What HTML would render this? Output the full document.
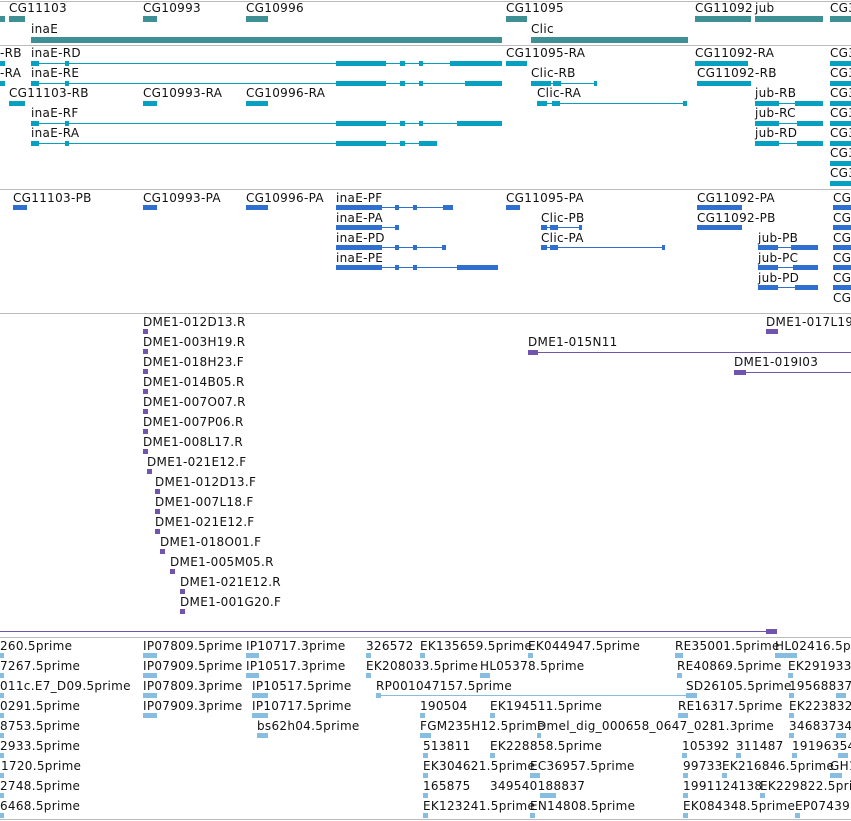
<!DOCTYPE html>
<html><head><meta charset="utf-8"><style>
body{margin:0;width:851px;height:821px;overflow:hidden;background:#fff;position:relative}
.l{position:absolute;font-family:"DejaVu Sans","Liberation Sans",sans-serif;font-size:12px;line-height:14px;letter-spacing:.3px;color:#111;white-space:nowrap}
.d{position:absolute;left:0;width:851px;height:1px;background:#bbb}
.g,.t,.p,.c,.e{position:absolute}
.g{background:#3f9094;height:6px}
.t{background:#08a0c0}
.p{background:#2f6fd0}
.c{background:#7054ae}
.e{background:#86bde0}
</style></head><body>
<div class="d" style="top:1px"></div>
<div class="d" style="top:45px"></div>
<div class="d" style="top:189px"></div>
<div class="d" style="top:313px"></div>
<div class="d" style="top:637px"></div>
<div class="d" style="top:819px"></div>

<!-- genes -->
<div class="l" style="left:9px;top:1px">CG11103</div>
<div class="l" style="left:143px;top:1px">CG10993</div>
<div class="l" style="left:246px;top:1px">CG10996</div>
<div class="l" style="left:506px;top:1px">CG11095</div>
<div class="l" style="left:695px;top:1px">CG11092</div>
<div class="l" style="left:755px;top:1px">jub</div>
<div class="l" style="left:830px;top:1px">CG3</div>
<div class="l" style="left:31px;top:22px">inaE</div>
<div class="l" style="left:531px;top:22px">Clic</div>
<div class="g" style="left:0;top:16px;width:5px"></div>
<div class="g" style="left:9px;top:16px;width:16px"></div>
<div class="g" style="left:143px;top:16px;width:14px"></div>
<div class="g" style="left:246px;top:16px;width:22px"></div>
<div class="g" style="left:506px;top:16px;width:21px"></div>
<div class="g" style="left:695px;top:16px;width:56px"></div>
<div class="g" style="left:755px;top:16px;width:68px"></div>
<div class="g" style="left:830px;top:16px;width:21px"></div>
<div class="g" style="left:31px;top:37px;width:471px"></div>
<div class="g" style="left:531px;top:37px;width:157px"></div>

<!-- transcripts -->
<div class="l" style="left:0;top:46px">-RB</div>
<div class="l" style="left:31px;top:46px">inaE-RD</div>
<div class="l" style="left:506px;top:46px">CG11095-RA</div>
<div class="l" style="left:695px;top:46px">CG11092-RA</div>
<div class="l" style="left:0;top:66px">-RA</div>
<div class="l" style="left:31px;top:66px">inaE-RE</div>
<div class="l" style="left:531px;top:66px">Clic-RB</div>
<div class="l" style="left:697px;top:66px">CG11092-RB</div>
<div class="l" style="left:9px;top:86px">CG11103-RB</div>
<div class="l" style="left:143px;top:86px">CG10993-RA</div>
<div class="l" style="left:246px;top:86px">CG10996-RA</div>
<div class="l" style="left:537px;top:86px">Clic-RA</div>
<div class="l" style="left:755px;top:86px">jub-RB</div>
<div class="l" style="left:31px;top:106px">inaE-RF</div>
<div class="l" style="left:755px;top:106px">jub-RC</div>
<div class="l" style="left:31px;top:126px">inaE-RA</div>
<div class="l" style="left:755px;top:126px">jub-RD</div>
<div class="l" style="left:830px;top:46px">CG3</div><div class="l" style="left:830px;top:66px">CG3</div><div class="l" style="left:830px;top:86px">CG3</div><div class="l" style="left:830px;top:106px">CG3</div><div class="l" style="left:830px;top:126px">CG3</div><div class="l" style="left:830px;top:146px">CG3</div><div class="l" style="left:830px;top:166px">CG3</div>
<!-- lines row1 y63 -->
<div class="t" style="left:0;top:61px;width:5px;height:5px"></div>
<div class="t" style="left:31px;top:63px;width:471px;height:1px"></div>
<div class="t" style="left:31px;top:61px;width:8px;height:5px"></div><div class="t" style="left:65px;top:61px;width:4px;height:5px"></div>
<div class="t" style="left:336px;top:61px;width:50px;height:5px"></div><div class="t" style="left:400px;top:61px;width:5px;height:5px"></div><div class="t" style="left:419px;top:61px;width:4px;height:5px"></div>
<div class="t" style="left:450px;top:61px;width:52px;height:5px"></div>
<div class="t" style="left:506px;top:61px;width:21px;height:5px"></div>
<div class="t" style="left:695px;top:61px;width:53px;height:5px"></div>
<div class="t" style="left:830px;top:61px;width:21px;height:5px"></div>
<!-- row2 y83 -->
<div class="t" style="left:0;top:81px;width:5px;height:5px"></div>
<div class="t" style="left:31px;top:83px;width:471px;height:1px"></div>
<div class="t" style="left:31px;top:81px;width:8px;height:5px"></div><div class="t" style="left:65px;top:81px;width:4px;height:5px"></div>
<div class="t" style="left:336px;top:81px;width:50px;height:5px"></div><div class="t" style="left:400px;top:81px;width:5px;height:5px"></div><div class="t" style="left:419px;top:81px;width:4px;height:5px"></div>
<div class="t" style="left:465px;top:81px;width:37px;height:5px"></div>
<div class="t" style="left:531px;top:83px;width:66px;height:1px"></div>
<div class="t" style="left:531px;top:81px;width:20px;height:5px"></div><div class="t" style="left:553px;top:81px;width:8px;height:5px"></div><div class="t" style="left:594px;top:81px;width:3px;height:5px"></div>
<div class="t" style="left:697px;top:81px;width:54px;height:5px"></div>
<div class="t" style="left:830px;top:81px;width:21px;height:5px"></div>
<!-- row3 y103 -->
<div class="t" style="left:9px;top:101px;width:16px;height:5px"></div>
<div class="t" style="left:143px;top:101px;width:14px;height:5px"></div>
<div class="t" style="left:246px;top:101px;width:22px;height:5px"></div>
<div class="t" style="left:537px;top:103px;width:150px;height:1px"></div>
<div class="t" style="left:537px;top:101px;width:10px;height:5px"></div><div class="t" style="left:552px;top:101px;width:8px;height:5px"></div><div class="t" style="left:683px;top:101px;width:4px;height:5px"></div>
<div class="t" style="left:755px;top:103px;width:68px;height:1px"></div>
<div class="t" style="left:755px;top:101px;width:24px;height:5px"></div><div class="t" style="left:795px;top:101px;width:28px;height:5px"></div>
<div class="t" style="left:830px;top:101px;width:21px;height:5px"></div>
<!-- row4 y123 -->
<div class="t" style="left:31px;top:123px;width:471px;height:1px"></div>
<div class="t" style="left:31px;top:121px;width:8px;height:5px"></div><div class="t" style="left:65px;top:121px;width:4px;height:5px"></div>
<div class="t" style="left:336px;top:121px;width:50px;height:5px"></div><div class="t" style="left:400px;top:121px;width:5px;height:5px"></div><div class="t" style="left:419px;top:121px;width:4px;height:5px"></div>
<div class="t" style="left:457px;top:121px;width:45px;height:5px"></div>
<div class="t" style="left:755px;top:123px;width:68px;height:1px"></div>
<div class="t" style="left:755px;top:121px;width:24px;height:5px"></div><div class="t" style="left:797px;top:121px;width:26px;height:5px"></div>
<div class="t" style="left:830px;top:121px;width:21px;height:5px"></div>
<!-- row5 y143 -->
<div class="t" style="left:31px;top:143px;width:406px;height:1px"></div>
<div class="t" style="left:31px;top:141px;width:8px;height:5px"></div><div class="t" style="left:65px;top:141px;width:4px;height:5px"></div>
<div class="t" style="left:336px;top:141px;width:50px;height:5px"></div><div class="t" style="left:400px;top:141px;width:5px;height:5px"></div>
<div class="t" style="left:419px;top:141px;width:18px;height:5px"></div>
<div class="t" style="left:755px;top:143px;width:68px;height:1px"></div>
<div class="t" style="left:755px;top:141px;width:24px;height:5px"></div><div class="t" style="left:797px;top:141px;width:26px;height:5px"></div>
<div class="t" style="left:830px;top:141px;width:21px;height:5px"></div>
<div class="t" style="left:830px;top:161px;width:21px;height:5px"></div>
<div class="t" style="left:830px;top:181px;width:21px;height:5px"></div>

<!-- proteins -->
<div class="l" style="left:13px;top:191px">CG11103-PB</div>
<div class="l" style="left:143px;top:191px">CG10993-PA</div>
<div class="l" style="left:246px;top:191px">CG10996-PA</div>
<div class="l" style="left:336px;top:191px">inaE-PF</div>
<div class="l" style="left:506px;top:191px">CG11095-PA</div>
<div class="l" style="left:697px;top:191px">CG11092-PA</div>
<div class="l" style="left:336px;top:211px">inaE-PA</div>
<div class="l" style="left:541px;top:211px">Clic-PB</div>
<div class="l" style="left:697px;top:211px">CG11092-PB</div>
<div class="l" style="left:336px;top:231px">inaE-PD</div>
<div class="l" style="left:541px;top:231px">Clic-PA</div>
<div class="l" style="left:758px;top:231px">jub-PB</div>
<div class="l" style="left:336px;top:251px">inaE-PE</div>
<div class="l" style="left:758px;top:251px">jub-PC</div>
<div class="l" style="left:758px;top:271px">jub-PD</div>
<div class="l" style="left:833px;top:191px">CG</div><div class="l" style="left:833px;top:211px">CG</div><div class="l" style="left:833px;top:231px">CG</div><div class="l" style="left:833px;top:251px">CG</div><div class="l" style="left:833px;top:271px">CG</div><div class="l" style="left:833px;top:291px">CG</div>
<div class="p" style="left:13px;top:205px;width:14px;height:5px"></div>
<div class="p" style="left:143px;top:205px;width:14px;height:5px"></div>
<div class="p" style="left:246px;top:205px;width:22px;height:5px"></div>
<div class="p" style="left:336px;top:207px;width:117px;height:1px"></div><div class="p" style="left:336px;top:205px;width:46px;height:5px"></div><div class="p" style="left:395px;top:205px;width:4px;height:5px"></div><div class="p" style="left:413px;top:205px;width:4px;height:5px"></div><div class="p" style="left:443px;top:205px;width:10px;height:5px"></div>
<div class="p" style="left:506px;top:205px;width:14px;height:5px"></div>
<div class="p" style="left:697px;top:205px;width:45px;height:5px"></div>
<div class="p" style="left:336px;top:227px;width:63px;height:1px"></div><div class="p" style="left:336px;top:225px;width:46px;height:5px"></div><div class="p" style="left:395px;top:225px;width:4px;height:5px"></div>
<div class="p" style="left:541px;top:227px;width:41px;height:1px"></div><div class="p" style="left:541px;top:225px;width:6px;height:5px"></div><div class="p" style="left:550px;top:225px;width:8px;height:5px"></div><div class="p" style="left:579px;top:225px;width:3px;height:5px"></div>
<div class="p" style="left:697px;top:225px;width:45px;height:5px"></div>
<div class="p" style="left:336px;top:247px;width:110px;height:1px"></div><div class="p" style="left:336px;top:245px;width:46px;height:5px"></div><div class="p" style="left:395px;top:245px;width:4px;height:5px"></div><div class="p" style="left:413px;top:245px;width:4px;height:5px"></div><div class="p" style="left:442px;top:245px;width:4px;height:5px"></div>
<div class="p" style="left:541px;top:247px;width:124px;height:1px"></div><div class="p" style="left:541px;top:245px;width:6px;height:5px"></div><div class="p" style="left:550px;top:245px;width:8px;height:5px"></div><div class="p" style="left:662px;top:245px;width:3px;height:5px"></div>
<div class="p" style="left:758px;top:247px;width:60px;height:1px"></div><div class="p" style="left:758px;top:245px;width:20px;height:5px"></div><div class="p" style="left:791px;top:245px;width:27px;height:5px"></div>
<div class="p" style="left:336px;top:267px;width:152px;height:1px"></div><div class="p" style="left:336px;top:265px;width:46px;height:5px"></div><div class="p" style="left:395px;top:265px;width:4px;height:5px"></div><div class="p" style="left:413px;top:265px;width:4px;height:5px"></div><div class="p" style="left:457px;top:265px;width:41px;height:5px"></div>
<div class="p" style="left:758px;top:267px;width:60px;height:1px"></div><div class="p" style="left:758px;top:265px;width:20px;height:5px"></div><div class="p" style="left:793px;top:265px;width:25px;height:5px"></div>
<div class="p" style="left:758px;top:287px;width:60px;height:1px"></div><div class="p" style="left:758px;top:285px;width:20px;height:5px"></div><div class="p" style="left:795px;top:285px;width:23px;height:5px"></div>
<div class="p" style="left:833px;top:205px;width:18px;height:5px"></div><div class="p" style="left:833px;top:225px;width:18px;height:5px"></div><div class="p" style="left:833px;top:245px;width:18px;height:5px"></div><div class="p" style="left:833px;top:265px;width:18px;height:5px"></div><div class="p" style="left:833px;top:285px;width:18px;height:5px"></div>

<!-- clones -->
<div class="l" style="left:143px;top:315px">DME1-012D13.R</div>
<div class="l" style="left:143px;top:335px">DME1-003H19.R</div>
<div class="l" style="left:143px;top:355px">DME1-018H23.F</div>
<div class="l" style="left:143px;top:375px">DME1-014B05.R</div>
<div class="l" style="left:143px;top:395px">DME1-007O07.R</div>
<div class="l" style="left:143px;top:415px">DME1-007P06.R</div>
<div class="l" style="left:143px;top:435px">DME1-008L17.R</div>
<div class="l" style="left:147px;top:455px">DME1-021E12.F</div>
<div class="l" style="left:155px;top:475px">DME1-012D13.F</div>
<div class="l" style="left:155px;top:495px">DME1-007L18.F</div>
<div class="l" style="left:155px;top:515px">DME1-021E12.F</div>
<div class="l" style="left:160px;top:535px">DME1-018O01.F</div>
<div class="l" style="left:170px;top:555px">DME1-005M05.R</div>
<div class="l" style="left:180px;top:575px">DME1-021E12.R</div>
<div class="l" style="left:180px;top:595px">DME1-001G20.F</div>
<div class="l" style="left:766px;top:315px">DME1-017L19</div>
<div class="l" style="left:528px;top:335px">DME1-015N11</div>
<div class="l" style="left:734px;top:355px">DME1-019I03</div>
<div class="c" style="left:143px;top:329px;width:5px;height:5px"></div>
<div class="c" style="left:143px;top:349px;width:5px;height:5px"></div>
<div class="c" style="left:143px;top:369px;width:5px;height:5px"></div>
<div class="c" style="left:143px;top:389px;width:5px;height:5px"></div>
<div class="c" style="left:143px;top:409px;width:5px;height:5px"></div>
<div class="c" style="left:143px;top:429px;width:5px;height:5px"></div>
<div class="c" style="left:143px;top:449px;width:5px;height:5px"></div>
<div class="c" style="left:147px;top:469px;width:5px;height:5px"></div>
<div class="c" style="left:155px;top:489px;width:5px;height:5px"></div>
<div class="c" style="left:155px;top:509px;width:5px;height:5px"></div>
<div class="c" style="left:155px;top:529px;width:5px;height:5px"></div>
<div class="c" style="left:160px;top:549px;width:5px;height:5px"></div>
<div class="c" style="left:170px;top:569px;width:5px;height:5px"></div>
<div class="c" style="left:180px;top:589px;width:5px;height:5px"></div>
<div class="c" style="left:180px;top:609px;width:5px;height:5px"></div>
<div class="c" style="left:766px;top:329px;width:12px;height:5px"></div>
<div class="c" style="left:528px;top:352px;width:323px;height:1px"></div><div class="c" style="left:528px;top:350px;width:10px;height:5px"></div>
<div class="c" style="left:734px;top:372px;width:117px;height:1px"></div><div class="c" style="left:734px;top:370px;width:12px;height:5px"></div>
<div class="c" style="left:0;top:631px;width:777px;height:1px"></div><div class="c" style="left:766px;top:629px;width:11px;height:5px"></div>

<!-- ESTs -->
<div class="l" style="left:0;top:639px">260.5prime</div>
<div class="l" style="left:0;top:659px">7267.5prime</div>
<div class="l" style="left:0;top:679px">011c.E7_D09.5prime</div>
<div class="l" style="left:0;top:699px">0291.5prime</div>
<div class="l" style="left:0;top:719px">8753.5prime</div>
<div class="l" style="left:0;top:739px">2933.5prime</div>
<div class="l" style="left:1px;top:759px">1720.5prime</div>
<div class="l" style="left:0;top:779px">2748.5prime</div>
<div class="l" style="left:0;top:799px">6468.5prime</div>
<div class="l" style="left:143px;top:639px">IP07809.5prime</div>
<div class="l" style="left:143px;top:659px">IP07909.5prime</div>
<div class="l" style="left:143px;top:679px">IP07809.3prime</div>
<div class="l" style="left:143px;top:699px">IP07909.3prime</div>
<div class="l" style="left:246px;top:639px">IP10717.3prime</div>
<div class="l" style="left:246px;top:659px">IP10517.3prime</div>
<div class="l" style="left:252px;top:679px">IP10517.5prime</div>
<div class="l" style="left:252px;top:699px">IP10717.5prime</div>
<div class="l" style="left:257px;top:719px">bs62h04.5prime</div>
<div class="l" style="left:366px;top:639px">326572</div>
<div class="l" style="left:420px;top:639px">EK135659.5prime</div>
<div class="l" style="left:528px;top:639px">EK044947.5prime</div>
<div class="l" style="left:675px;top:639px">RE35001.5prime</div>
<div class="l" style="left:775px;top:639px">HL02416.5prime</div>
<div class="l" style="left:366px;top:659px">EK208033.5prime</div>
<div class="l" style="left:480px;top:659px">HL05378.5prime</div>
<div class="l" style="left:677px;top:659px">RE40869.5prime</div>
<div class="l" style="left:788px;top:659px">EK291933</div>
<div class="l" style="left:376px;top:679px">RP001047157.5prime</div>
<div class="l" style="left:686px;top:679px">SD26105.5prime</div>
<div class="l" style="left:789px;top:679px">19568837</div>
<div class="l" style="left:420px;top:699px">190504</div>
<div class="l" style="left:490px;top:699px">EK194511.5prime</div>
<div class="l" style="left:678px;top:699px">RE16317.5prime</div>
<div class="l" style="left:789px;top:699px">EK223832</div>
<div class="l" style="left:420px;top:719px">FGM235H12.5prime</div>
<div class="l" style="left:537px;top:719px">Dmel_dig_000658_0647_0281.3prime</div>
<div class="l" style="left:789px;top:719px">34683734</div>
<div class="l" style="left:423px;top:739px">513811</div>
<div class="l" style="left:490px;top:739px">EK228858.5prime</div>
<div class="l" style="left:682px;top:739px">105392</div>
<div class="l" style="left:736px;top:739px">311487</div>
<div class="l" style="left:792px;top:739px">19196354</div>
<div class="l" style="left:423px;top:759px">EK304621.5prime</div>
<div class="l" style="left:530px;top:759px">EC36957.5prime</div>
<div class="l" style="left:683px;top:759px">99733</div>
<div class="l" style="left:722px;top:759px">EK216846.5prime</div>
<div class="l" style="left:830px;top:759px">GH1</div>
<div class="l" style="left:423px;top:779px">165875</div>
<div class="l" style="left:490px;top:779px">349540188837</div>
<div class="l" style="left:683px;top:779px">1991124138</div>
<div class="l" style="left:760px;top:779px">EK229822.5prime</div>
<div class="l" style="left:423px;top:799px">EK123241.5prime</div>
<div class="l" style="left:530px;top:799px">EN14808.5prime</div>
<div class="l" style="left:683px;top:799px">EK084348.5prime</div>
<div class="l" style="left:795px;top:799px">EP07439.5</div>
<!-- EST glyphs -->
<div class="e" style="left:0;top:653px;width:4px;height:5px"></div><div class="e" style="left:0;top:673px;width:4px;height:5px"></div><div class="e" style="left:0;top:693px;width:4px;height:5px"></div><div class="e" style="left:0;top:713px;width:4px;height:5px"></div><div class="e" style="left:0;top:733px;width:4px;height:5px"></div><div class="e" style="left:0;top:753px;width:4px;height:5px"></div><div class="e" style="left:0;top:773px;width:4px;height:5px"></div><div class="e" style="left:0;top:793px;width:4px;height:5px"></div><div class="e" style="left:0;top:813px;width:4px;height:5px"></div>
<div class="e" style="left:143px;top:653px;width:14px;height:5px"></div><div class="e" style="left:143px;top:673px;width:14px;height:5px"></div><div class="e" style="left:143px;top:693px;width:14px;height:5px"></div><div class="e" style="left:143px;top:713px;width:14px;height:5px"></div>
<div class="e" style="left:246px;top:653px;width:13px;height:5px"></div><div class="e" style="left:246px;top:673px;width:13px;height:5px"></div><div class="e" style="left:252px;top:693px;width:16px;height:5px"></div><div class="e" style="left:252px;top:713px;width:16px;height:5px"></div><div class="e" style="left:257px;top:733px;width:11px;height:5px"></div>
<div class="e" style="left:366px;top:653px;width:5px;height:5px"></div><div class="e" style="left:366px;top:673px;width:5px;height:5px"></div>
<div class="e" style="left:376px;top:695px;width:321px;height:1px"></div><div class="e" style="left:376px;top:693px;width:5px;height:5px"></div><div class="e" style="left:686px;top:693px;width:11px;height:5px"></div>
<div class="e" style="left:420px;top:653px;width:5px;height:5px"></div><div class="e" style="left:528px;top:653px;width:5px;height:5px"></div><div class="e" style="left:675px;top:653px;width:8px;height:5px"></div><div class="e" style="left:775px;top:653px;width:22px;height:5px"></div>
<div class="e" style="left:480px;top:673px;width:10px;height:5px"></div><div class="e" style="left:677px;top:673px;width:5px;height:5px"></div><div class="e" style="left:788px;top:673px;width:5px;height:5px"></div>
<div class="e" style="left:789px;top:693px;width:5px;height:5px"></div><div class="e" style="left:836px;top:693px;width:10px;height:5px"></div>
<div class="e" style="left:420px;top:713px;width:5px;height:5px"></div><div class="e" style="left:490px;top:713px;width:5px;height:5px"></div><div class="e" style="left:678px;top:713px;width:10px;height:5px"></div><div class="e" style="left:789px;top:713px;width:5px;height:5px"></div>
<div class="e" style="left:420px;top:733px;width:11px;height:5px"></div><div class="e" style="left:537px;top:733px;width:4px;height:5px"></div><div class="e" style="left:789px;top:733px;width:5px;height:5px"></div><div class="e" style="left:836px;top:733px;width:10px;height:5px"></div>
<div class="e" style="left:423px;top:753px;width:5px;height:5px"></div><div class="e" style="left:490px;top:753px;width:5px;height:5px"></div><div class="e" style="left:682px;top:753px;width:5px;height:5px"></div><div class="e" style="left:736px;top:753px;width:5px;height:5px"></div><div class="e" style="left:792px;top:753px;width:5px;height:5px"></div><div class="e" style="left:838px;top:753px;width:10px;height:5px"></div>
<div class="e" style="left:423px;top:773px;width:5px;height:5px"></div><div class="e" style="left:530px;top:773px;width:10px;height:5px"></div><div class="e" style="left:683px;top:773px;width:5px;height:5px"></div><div class="e" style="left:722px;top:773px;width:5px;height:5px"></div><div class="e" style="left:830px;top:773px;width:12px;height:5px"></div>
<div class="e" style="left:423px;top:793px;width:5px;height:5px"></div><div class="e" style="left:540px;top:793px;width:16px;height:5px"></div><div class="e" style="left:683px;top:793px;width:5px;height:5px"></div><div class="e" style="left:760px;top:793px;width:5px;height:5px"></div>
<div class="e" style="left:423px;top:813px;width:5px;height:5px"></div><div class="e" style="left:530px;top:813px;width:5px;height:5px"></div><div class="e" style="left:683px;top:813px;width:5px;height:5px"></div><div class="e" style="left:795px;top:813px;width:5px;height:5px"></div>
</body></html>
